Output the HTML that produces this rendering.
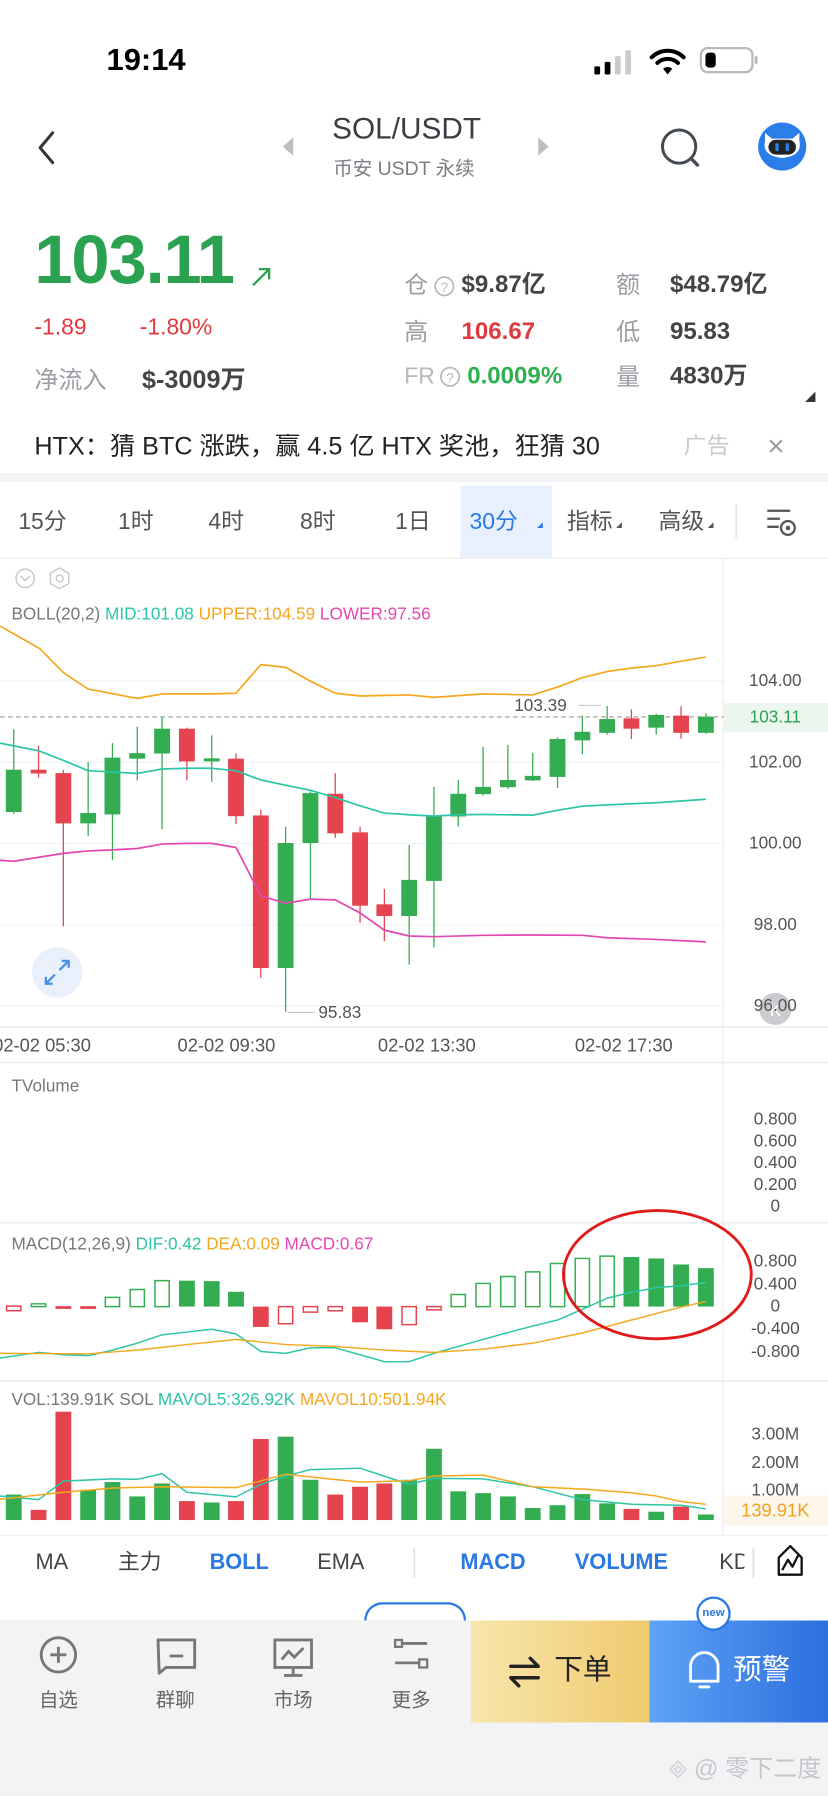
<!DOCTYPE html>
<html><head><meta charset="utf-8">
<style>
html,body{margin:0;padding:0;background:#fff;}
body{width:828px;height:1796px;overflow:hidden;position:relative;}
#w{position:absolute;left:0;top:0;width:723px;height:1568px;transform:scale(1.14523);transform-origin:0 0;font-family:"Liberation Sans","Noto Sans CJK SC",sans-serif;color:#333;}
.t{position:absolute;white-space:nowrap;line-height:1;z-index:2;}
svg{position:absolute;left:0;top:0;z-index:1;}
.g{color:#2ba24f}.r{color:#e0393e}.gr{color:#9a9da3}
.ax{position:absolute;font-size:15px;color:#555;width:80px;text-align:center;left:637px;line-height:1;z-index:2}
</style></head><body><div id="w">
<svg id="s" width="723" height="1568" viewBox="0 0 723 1568"></svg>

<!-- status -->
<div class="t" style="left:93px;top:39px;font-size:27px;font-weight:bold;color:#000">19:14</div>
<!-- nav -->
<div class="t" style="left:290px;top:99px;font-size:26px;color:#3a3d42">SOL/USDT</div>
<div class="t" style="left:291px;top:139px;font-size:17px;color:#7a7d83">币安 USDT 永续</div>
<!-- price -->
<div class="t g" style="left:30px;top:197px;font-size:60px;font-weight:bold;letter-spacing:-1px">103.11</div>
<div class="t r" style="left:30px;top:276px;font-size:20px">-1.89</div>
<div class="t r" style="left:122px;top:276px;font-size:20px">-1.80%</div>
<div class="t gr" style="left:30px;top:322px;font-size:21px">净流入</div>
<div class="t" style="left:124px;top:321px;font-size:22px;font-weight:bold;color:#444">$-3009万</div>
<div class="t gr" style="left:353px;top:239px;font-size:21px">仓</div>
<div class="t" style="left:403px;top:238px;font-size:21px;font-weight:bold;color:#444">$9.87亿</div>
<div class="t gr" style="left:538px;top:239px;font-size:21px">额</div>
<div class="t" style="left:585px;top:238px;font-size:21px;font-weight:bold;color:#444">$48.79亿</div>
<div class="t gr" style="left:353px;top:280px;font-size:21px">高</div>
<div class="t r" style="left:403px;top:279px;font-size:21px;font-weight:bold">106.67</div>
<div class="t gr" style="left:538px;top:280px;font-size:21px">低</div>
<div class="t" style="left:585px;top:279px;font-size:21px;font-weight:bold;color:#444">95.83</div>
<div class="t gr" style="left:353px;top:319px;font-size:20px;color:#b5b8bd">FR</div>
<div class="t g" style="left:408px;top:318px;font-size:21px;font-weight:bold;color:#2db14f">0.0009%</div>
<div class="t gr" style="left:538px;top:319px;font-size:21px">量</div>
<div class="t" style="left:585px;top:318px;font-size:21px;font-weight:bold;color:#444">4830万</div>
<!-- ad -->
<div class="t" style="left:30px;top:379px;font-size:22px;color:#222;width:544px;overflow:hidden">HTX：猜 BTC 涨跌，赢 4.5 亿 HTX 奖池，狂猜 30</div>
<div class="t" style="left:597px;top:380px;font-size:20px;color:#c8cacf">广告</div>
<div class="t" style="left:670px;top:376px;font-size:26px;color:#9a9da3">×</div>
<!-- tabs -->
<div style="position:absolute;left:0;top:413px;width:723px;height:8px;background:#f3f4f6"></div>
<div style="position:absolute;left:402px;top:424px;width:80px;height:63px;background:#e7f0fc"></div>
<div class="t" style="left:16px;top:446px;font-size:20px;color:#555">15分</div>
<div class="t" style="left:103px;top:446px;font-size:20px;color:#555">1时</div>
<div class="t" style="left:182px;top:446px;font-size:20px;color:#555">4时</div>
<div class="t" style="left:262px;top:446px;font-size:20px;color:#555">8时</div>
<div class="t" style="left:345px;top:446px;font-size:20px;color:#555">1日</div>
<div class="t" style="left:410px;top:446px;font-size:20px;color:#2a78e4">30分</div>
<div class="t" style="left:495px;top:446px;font-size:20px;color:#555">指标</div>
<div class="t" style="left:575px;top:446px;font-size:20px;color:#555">高级</div>
<!-- chart labels -->
<div class="t" style="left:10px;top:529px;font-size:15px;color:#777">BOLL(20,2) <span style="color:#2cc5a6">MID:101.08</span> <span style="color:#f5a81f">UPPER:104.59</span> <span style="color:#e447b2">LOWER:97.56</span></div>
<div class="ax" style="top:587px">104.00</div>
<div class="ax" style="top:658px">102.00</div>
<div class="ax" style="top:729px">100.00</div>
<div class="ax" style="top:800px">98.00</div>
<div class="ax" style="top:871px">96.00</div>
<div style="position:absolute;left:632px;top:614px;width:91px;height:25px;background:#ebf7ee"></div>
<div class="ax" style="top:619px;color:#2ba24f">103.11</div>
<div class="t" style="left:449px;top:609px;font-size:15px;color:#555">103.39</div>
<div class="t" style="left:278px;top:877px;font-size:15px;color:#555">95.83</div>
<div class="t" style="left:-6px;top:906px;font-size:16px;color:#555">02-02 05:30</div>
<div class="t" style="left:155px;top:906px;font-size:16px;color:#555">02-02 09:30</div>
<div class="t" style="left:330px;top:906px;font-size:16px;color:#555">02-02 13:30</div>
<div class="t" style="left:502px;top:906px;font-size:16px;color:#555">02-02 17:30</div>
<div class="t" style="left:10px;top:941px;font-size:15px;color:#777">TVolume</div>
<div class="ax" style="top:970px">0.800</div>
<div class="ax" style="top:989px">0.600</div>
<div class="ax" style="top:1008px">0.400</div>
<div class="ax" style="top:1027px">0.200</div>
<div class="ax" style="top:1046px">0</div>
<div class="t" style="left:10px;top:1079px;font-size:15px;color:#777">MACD(12,26,9) <span style="color:#2cc5a6">DIF:0.42</span> <span style="color:#f5a81f">DEA:0.09</span> <span style="color:#e447b2">MACD:0.67</span></div>
<div class="ax" style="top:1094px">0.800</div>
<div class="ax" style="top:1114px">0.400</div>
<div class="ax" style="top:1133px">0</div>
<div class="ax" style="top:1153px">-0.400</div>
<div class="ax" style="top:1173px">-0.800</div>
<div class="t" style="left:10px;top:1215px;font-size:15px;color:#777">VOL:139.91K SOL <span style="color:#2cc5a6">MAVOL5:326.92K</span> <span style="color:#f5a81f">MAVOL10:501.94K</span></div>
<div class="ax" style="top:1245px">3.00M</div>
<div class="ax" style="top:1270px">2.00M</div>
<div class="ax" style="top:1294px">1.00M</div>
<div style="position:absolute;left:632px;top:1306px;width:91px;height:26px;background:#fdf6ea"></div>
<div class="ax" style="top:1312px;color:#f0a21e;font-size:16px">139.91K</div>
<!-- indicator bar -->
<div class="t" style="left:31px;top:1355px;font-size:19px;color:#444">MA</div>
<div class="t" style="left:103px;top:1355px;font-size:19px;color:#444">主力</div>
<div class="t" style="left:183px;top:1355px;font-size:19px;color:#2a78e4;font-weight:bold">BOLL</div>
<div class="t" style="left:277px;top:1355px;font-size:19px;color:#444">EMA</div>
<div class="t" style="left:402px;top:1355px;font-size:19px;color:#2a78e4;font-weight:bold">MACD</div>
<div class="t" style="left:502px;top:1355px;font-size:19px;color:#2a78e4;font-weight:bold">VOLUME</div>
<div class="t" style="left:628px;top:1355px;font-size:19px;color:#444;width:22px;overflow:hidden">KD</div>
<div style="position:absolute;left:318px;top:1399px;width:85px;height:30px;border:2px solid #2a78e4;border-radius:16px;border-bottom:none"></div>
<div style="position:absolute;left:608px;top:1394px;width:26px;height:26px;border:2px solid #2a78e4;border-radius:50%;background:#fff;font-size:10px;color:#2a78e4;text-align:center;line-height:26px;font-weight:bold;z-index:3">new</div>
<!-- bottom bar -->
<div style="position:absolute;left:0;top:1415px;width:723px;height:153px;background:#f2f3f5"></div>
<div class="t" style="left:34px;top:1476px;font-size:17px;color:#666">自选</div>
<div class="t" style="left:136px;top:1476px;font-size:17px;color:#666">群聊</div>
<div class="t" style="left:239px;top:1476px;font-size:17px;color:#666">市场</div>
<div class="t" style="left:342px;top:1476px;font-size:17px;color:#666">更多</div>
<div style="position:absolute;left:411px;top:1415px;width:156px;height:89px;background:linear-gradient(90deg,#f8e6ad,#efca6e)"></div>
<div style="position:absolute;left:567px;top:1415px;width:156px;height:89px;background:linear-gradient(90deg,#5ea3f6,#2c6fdf)"></div>
<div class="t" style="left:484px;top:1446px;font-size:25px;color:#222">下单</div>
<div class="t" style="left:640px;top:1446px;font-size:25px;color:#fff">预警</div>
<div class="t" style="left:606px;top:1534px;font-size:21px;color:#c4c6ca">@ 零下二度</div>
</div>
<script>
var s=document.getElementById('s');var h='';
function pl(pts,c,w,tr){h+='<polyline transform="'+tr+'" fill="none" stroke="'+c+'" stroke-width="'+w+'" vector-effect="non-scaling-stroke" stroke-linejoin="round" points="'+pts.map(function(p){return p.join(',')}).join(' ')+'"/>';}
var X=0.461;
h+='<rect x="0" y="487" width="723" height="1" fill="#eceef1"/>';
[594,665,736,807,878].forEach(function(y){h+='<rect x="0" y="'+y+'" width="632" height="1" fill="#eff1f4"/>';});
h+='<rect x="631" y="488" width="1" height="852" fill="#eceef1"/>';
h+='<rect x="0" y="896" width="723" height="1.5" fill="#eceef1"/><rect x="0" y="927" width="723" height="1.5" fill="#eceef1"/>';
h+='<rect x="0" y="1067" width="723" height="1.5" fill="#eceef1"/><rect x="0" y="1205" width="723" height="1.5" fill="#eceef1"/><rect x="0" y="1340" width="723" height="1" fill="#eceef1"/>';
h+='<line x1="0" y1="626" x2="632" y2="626" stroke="#999" stroke-dasharray="4,3" stroke-width="1"/>';
h+='<line x1="505" y1="616" x2="525" y2="616" stroke="#ccc"/><line x1="251" y1="884" x2="275" y2="884" stroke="#ccc"/>';
h+='<rect x="519" y="58" width="5" height="7" rx="1" fill="#000"/><rect x="528" y="54" width="5" height="11" rx="1" fill="#000"/><rect x="537" y="49" width="5" height="16" rx="1" fill="#c9cacc"/><rect x="546" y="44" width="5" height="21" rx="1" fill="#c9cacc"/>';
h+='<path d="M569 50 A20 20 0 0 1 597 50" fill="none" stroke="#000" stroke-width="3.5" stroke-linecap="round"/><path d="M574 55 A13 13 0 0 1 592 55" fill="none" stroke="#000" stroke-width="3.5" stroke-linecap="round"/><path d="M579 60 L583 65 L587 60 A6 6 0 0 0 579 60Z" fill="#000"/>';
h+='<rect x="612" y="42" width="45" height="21" rx="6" fill="none" stroke="#b8b9bc" stroke-width="2"/><rect x="616" y="46" width="9" height="13" rx="3" fill="#000"/><rect x="659" y="49" width="2.5" height="7" rx="1" fill="#b8b9bc"/>';
h+='<path d="M46 116 L35 129 L46 142" fill="none" stroke="#333" stroke-width="2.6" stroke-linecap="round" stroke-linejoin="round"/>';
h+='<path d="M256 120 L247 128 L256 136Z" fill="#bbbec3"/><path d="M470 120 L479 128 L470 136Z" fill="#bbbec3"/>';
h+='<circle cx="593" cy="128" r="14.5" fill="none" stroke="#444a52" stroke-width="2.6"/><path d="M604 139 L609 144" stroke="#444a52" stroke-width="3" stroke-linecap="round"/>';
h+='<circle cx="683" cy="128" r="21" fill="#2b7ee8"/><path d="M668 123 L668 116 L674 121 L692 121 L698 116 L698 123 Q701 136 683 138 Q665 136 668 123Z" fill="#fff"/><rect x="671" y="122" width="24" height="13" rx="6.5" fill="#222"/><rect x="677" y="125" width="3" height="7" rx="1.5" fill="#2b7ee8"/><rect x="686" y="125" width="3" height="7" rx="1.5" fill="#2b7ee8"/>';
h+='<path d="M221 249 L235 235 M226 235 L235 235 L235 244" fill="none" stroke="#2ba24f" stroke-width="2"/>';
h+='<circle cx="388" cy="250" r="8" fill="none" stroke="#b5b8bd" stroke-width="1.5"/><text x="388" y="255" font-size="12" text-anchor="middle" fill="#b5b8bd" font-family="Liberation Sans">?</text>';
h+='<circle cx="393" cy="329" r="8" fill="none" stroke="#b5b8bd" stroke-width="1.5"/><text x="393" y="334" font-size="12" text-anchor="middle" fill="#b5b8bd" font-family="Liberation Sans">?</text>';
h+='<path d="M712 342 L712 351 L703 351Z" fill="#333"/>';
h+='<path d="M538 461 L543 461 L543 456Z" fill="#555"/><path d="M618 461 L623 461 L623 456Z" fill="#555"/><path d="M469 461 L474 461 L474 456Z" fill="#2a78e4"/>';
h+='<rect x="642" y="440" width="1.5" height="30" fill="#e3e5e8"/>';
h+='<path d="M670 446 H690 M670 453 H681 M670 460 H680" stroke="#555" stroke-width="2"/><circle cx="688" cy="461" r="6" fill="none" stroke="#555" stroke-width="2"/><circle cx="688" cy="461" r="2" fill="#555"/>';
h+='<circle cx="22" cy="505" r="8" fill="none" stroke="#c8cacd" stroke-width="1.3"/><path d="M18 503 L22 507 L26 503" fill="none" stroke="#c8cacd" stroke-width="1.3"/><path d="M52 496 L60 500.5 L60 509.5 L52 514 L44 509.5 L44 500.5Z" fill="none" stroke="#c8cacd" stroke-width="1.3"/><circle cx="52" cy="505" r="3" fill="none" stroke="#c8cacd" stroke-width="1.3"/>';
h+='<circle cx="50" cy="849" r="22" fill="#e9f0fb"/><path d="M52 847 L60 839 M54 839 L60 839 L60 845 M48 851 L40 859 M40 853 L40 859 L46 859" fill="none" stroke="#4a8fe8" stroke-width="2"/>';
h+='<circle cx="677" cy="881" r="14" fill="#c5c7cb" opacity=".9"/><text x="677" y="887" font-size="15" text-anchor="middle" fill="#fff" font-family="Liberation Sans">K</text>';
var T2='matrix('+X+',0,0,0.3007,0,471.5)';
var G='#34ad52',R='#e5444f';
var c=[[26,'g',667,790,550,795],[73,'r',667,678,597,690],[120,'r',677,823,668,1122],[167,'g',793,823,645,860],[213,'g',632,797,590,930],[260,'g',619,635,542,698],[307,'g',548,620,515,840],[354,'r',548,643,545,698],[401,'g',634,643,567,702],[447,'r',635,802,620,825],[494,'r',800,1243,783,1272],[541,'g',880,1243,833,1370],[588,'g',735,880,730,1040],[635,'r',737,852,677,865],[682,'r',849,1062,833,1112],[728,'r',1058,1092,1013,1165],[775,'g',987,1092,885,1233],[822,'g',803,990,717,1183],[868,'g',737,803,697,832],[915,'g',717,738,600,742],[962,'g',697,718,595,723],[1009,'g',685,698,618,700],[1056,'g',578,688,573,720],[1103,'g',557,582,510,622],[1150,'g',520,560,482,565],[1196,'r',518,548,492,578],[1243,'g',508,545,505,565],[1290,'r',510,560,483,577],[1337,'g',513,560,503,563]];
h+='<g transform="'+T2+'">';
c.forEach(function(k){var col=k[1]=='g'?G:R;h+='<rect x="'+(k[0]-1.2)+'" y="'+k[4]+'" width="2.4" height="'+(k[5]-k[4])+'" fill="'+col+'"/><rect x="'+(k[0]-15)+'" y="'+k[2]+'" width="30" height="'+Math.max(k[3]-k[2],6)+'" fill="'+col+'"/>';});
h+='</g>';
pl([[0,250],[75,315],[120,385],[167,433],[260,460],[307,447],[400,447],[447,445],[494,362],[541,370],[588,410],[635,445],[682,453],[775,450],[822,457],[915,447],[1009,450],[1056,427],[1103,400],[1150,382],[1196,372],[1243,365],[1290,352],[1337,340]],'#f5a81f',1.5,T2);
pl([[0,590],[73,612],[120,640],[167,670],[260,678],[307,665],[354,663],[401,663],[447,670],[494,697],[541,712],[588,727],[635,748],[682,772],[728,793],[775,798],[822,802],[868,798],[915,797],[1009,799],[1056,785],[1103,773],[1196,766],[1243,763],[1290,758],[1337,753]],'#2cc5a6',1.5,T2);
pl([[0,930],[26,933],[120,910],[167,903],[213,900],[260,896],[307,883],[354,881],[401,881],[447,893],[494,1033],[541,1055],[588,1043],[635,1045],[682,1083],[728,1133],[775,1150],[822,1152],[915,1148],[1009,1147],[1103,1148],[1150,1155],[1243,1160],[1337,1167]],'#e447b2',1.5,T2);
var T3='matrix('+X+',0,0,0.4043,0,934.3)';
var m=[[26,510,520,'r',0],[73,505,511,'g',0],[120,510,516,'r',1],[167,510,516,'r',1],[213,491,511,'g',0],[260,474,511,'g',0],[307,455,511,'g',0],[354,455,511,'g',1],[401,456,511,'g',1],[447,479,511,'g',1],[494,511,555,'r',1],[541,511,548,'r',0],[588,511,523,'r',0],[635,511,520,'r',0],[682,511,545,'r',1],[728,511,560,'r',1],[775,511,550,'r',0],[822,511,518,'r',0],[868,485,511,'g',0],[915,461,511,'g',0],[962,446,511,'g',0],[1009,436,511,'g',0],[1056,418,511,'g',0],[1103,407,511,'g',0],[1150,402,511,'g',0],[1196,404,511,'g',1],[1243,407,511,'g',1],[1290,420,511,'g',1],[1337,428,511,'g',1]];
h+='<g transform="'+T3+'">';
m.forEach(function(b){var col=b[3]=='g'?G:R;var hh=Math.max(b[2]-b[1],5);if(b[4])h+='<rect x="'+(b[0]-15)+'" y="'+b[1]+'" width="30" height="'+hh+'" fill="'+col+'"/>';else h+='<rect x="'+(b[0]-13.5)+'" y="'+b[1]+'" width="27" height="'+hh+'" fill="#fff" stroke="'+col+'" stroke-width="1.3" vector-effect="non-scaling-stroke"/>';});
var v=[[26,917,'g'],[73,950,'r'],[120,738,'r'],[167,907,'g'],[213,890,'g'],[260,921,'g'],[307,893,'g'],[354,931,'r'],[401,934,'g'],[447,931,'r'],[494,797,'r'],[541,792,'g'],[588,885,'g'],[635,917,'r'],[682,900,'r'],[728,893,'r'],[775,885,'g'],[822,818,'g'],[868,910,'g'],[915,914,'g'],[962,921,'g'],[1009,946,'g'],[1056,940,'g'],[1103,916,'g'],[1150,936,'g'],[1196,948,'r'],[1243,954,'g'],[1290,943,'r'],[1337,960,'g']];
v.forEach(function(b){h+='<rect x="'+(b[0]-15)+'" y="'+b[1]+'" width="30" height="'+(972-b[1])+'" fill="'+(b[2]=='g'?G:R)+'"/>';});
h+='</g>';
pl([[0,622],[73,610],[120,615],[167,617],[213,605],[260,590],[307,572],[354,566],[401,560],[447,570],[494,608],[541,612],[588,600],[635,600],[682,615],[728,630],[775,630],[822,612],[868,597],[915,582],[962,567],[1009,553],[1056,540],[1103,517],[1150,493],[1196,480],[1243,470],[1290,466],[1337,459]],'#2cc5a6',1.3,T3);
pl([[0,612],[167,613],[260,605],[354,593],[447,582],[541,593],[635,597],[728,605],[822,610],[915,603],[1009,590],[1103,568],[1196,540],[1290,512],[1337,500]],'#f5a81f',1.3,T3);
pl([[0,920],[73,928],[120,888],[213,883],[260,884],[307,872],[354,912],[447,922],[494,895],[541,877],[588,863],[682,860],[775,895],[822,882],[915,883],[1009,900],[1103,928],[1196,938],[1290,940],[1337,948]],'#2cc5a6',1.3,T3);
pl([[0,927],[120,912],[213,903],[307,900],[447,902],[541,873],[682,890],[775,887],[822,877],[915,875],[1009,900],[1103,905],[1196,913],[1243,920],[1290,932],[1337,938]],'#f5a81f',1.3,T3);
h+='<ellipse cx="574" cy="1113" rx="82" ry="56" fill="none" stroke="#e01b1b" stroke-width="2.5"/>';
h+='<rect x="361" y="1352" width="1.5" height="26" fill="#dfe1e4"/><rect x="657" y="1352" width="1.5" height="26" fill="#dfe1e4"/>';
h+='<path d="M680 1375 L680 1360 L690 1350 L700 1360 L700 1375Z M683 1371 L688 1362 L692 1368 L697 1358" fill="none" stroke="#111" stroke-width="2" stroke-linejoin="round"/>';
h+='<circle cx="51" cy="1445" r="15" fill="none" stroke="#777" stroke-width="2.5"/><path d="M51 1438 V1452 M44 1445 H58" stroke="#777" stroke-width="2.5"/>';
h+='<path d="M138 1432 H170 V1456 H145 L139 1461 Z" fill="none" stroke="#777" stroke-width="2.5" stroke-linejoin="round"/><path d="M148 1446 H160" stroke="#777" stroke-width="2.5"/>';
h+='<rect x="240" y="1432" width="32" height="24" fill="none" stroke="#777" stroke-width="2.5"/><path d="M246 1449 L252 1442 L257 1447 L265 1439 M256 1457 V1462 M248 1463 H264" fill="none" stroke="#777" stroke-width="2.5"/>';
h+='<rect x="345" y="1432" width="6" height="6" fill="none" stroke="#777" stroke-width="2"/><path d="M351 1435 H373 M345 1452 H367" stroke="#777" stroke-width="2.5"/><rect x="366" y="1449" width="7" height="7" fill="none" stroke="#777" stroke-width="2"/>';
h+='<path d="M446 1455 H470 L463 1448 M470 1465 H446 L453 1472" fill="none" stroke="#222" stroke-width="3" stroke-linecap="round" stroke-linejoin="round"/>';
h+='<path d="M603 1468 V1455 A12 12 0 0 1 627 1455 V1468 Z M611 1473 H619" fill="none" stroke="#fff" stroke-width="2.5" stroke-linejoin="round" stroke-linecap="round"/>';
h+='<path d="M585 1545 L592 1538 L599 1545 L592 1552Z M589 1545 L592 1542 L595 1545 L592 1548Z" fill="none" stroke="#d2d4d7" stroke-width="1.5"/>';
s.innerHTML=h;
</script>
</body></html>
